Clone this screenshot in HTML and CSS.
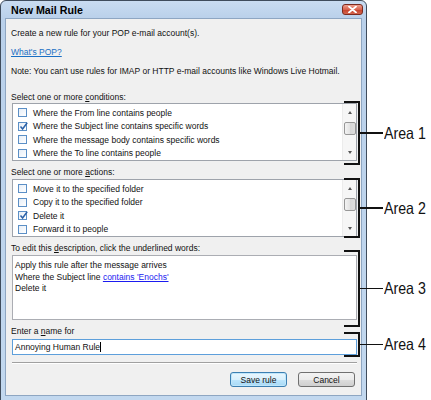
FILE: index.html
```html
<!DOCTYPE html>
<html>
<head>
<meta charset="utf-8">
<title>New Mail Rule</title>
<link rel="stylesheet" href="styles.css">
</head>
<body>
<div class="stage">
  <div class="window">
    <div class="titlebar">
      <span class="title">New Mail Rule</span>
      <span class="close">
        <svg width="9" height="7" viewBox="0 0 9 7"><path d="M1 0.5 L8 6.5 M8 0.5 L1 6.5" stroke="#fff" stroke-width="1.8" stroke-linecap="round"/></svg>
      </span>
    </div>
    <div class="content">
      <div class="line">Create a new rule for your POP e-mail account(s).</div>
      <div class="line gap7"><a class="link">What's POP?</a></div>
      <div class="line gap7">Note: You can't use rules for IMAP or HTTP e-mail accounts like Windows Live Hotmail.</div>

      <div class="line gap14">Select one or more <u>c</u>onditions:</div>
      <div class="listbox">
        <ul class="items">
          <li><span class="cb"></span>Where the From line contains people</li>
          <li><span class="cb checked"><svg width="9" height="9" viewBox="0 0 9 9"><path d="M1.5 4.5 L3.6 7 L8.2 0.8" fill="none" stroke="#2c62a8" stroke-width="1.5"/></svg></span>Where the Subject line contains specific words</li>
          <li><span class="cb"></span>Where the message body contains specific words</li>
          <li><span class="cb"></span>Where the To line contains people</li>
        </ul>
        <div class="scrollbar">
          <div class="sb-btn"><span class="arr up"></span></div>
          <div class="thumb"></div>
          <div class="sb-fill"></div>
          <div class="sb-btn"><span class="arr down"></span></div>
        </div>
      </div>

      <div class="line gap5">Select one or more <u>a</u>ctions:</div>
      <div class="listbox gap1">
        <ul class="items">
          <li><span class="cb"></span>Move it to the specified folder</li>
          <li><span class="cb"></span>Copy it to the specified folder</li>
          <li><span class="cb checked"><svg width="9" height="9" viewBox="0 0 9 9"><path d="M1.5 4.5 L3.6 7 L8.2 0.8" fill="none" stroke="#2c62a8" stroke-width="1.5"/></svg></span>Delete it</li>
          <li><span class="cb"></span>Forward it to people</li>
        </ul>
        <div class="scrollbar">
          <div class="sb-btn"><span class="arr up"></span></div>
          <div class="thumb"></div>
          <div class="sb-fill"></div>
          <div class="sb-btn"><span class="arr down"></span></div>
        </div>
      </div>

      <div class="line gap5">To edit this <u>d</u>escription, click the underlined words:</div>
      <div class="desc">
        <div>Apply this rule after the message arrives</div>
        <div>Where the Subject line <a class="ulink">contains 'Enochs'</a></div>
        <div>Delete it</div>
      </div>

      <div class="line gap5">Enter a <u>n</u>ame for</div>
      <div class="namebox"><span>Annoying Human Rule</span><span class="caret"></span></div>

      <div class="separator"></div>

      <div class="buttons">
        <span class="btn default">Save rule</span>
        <span class="btn">Cancel</span>
      </div>
    </div>
  </div>

  <div class="callout c1"><span class="bracket"></span><span class="leader"></span><span class="area">Area 1</span></div>
  <div class="callout c2"><span class="bracket"></span><span class="leader"></span><span class="area">Area 2</span></div>
  <div class="callout c3"><span class="bracket"></span><span class="leader"></span><span class="area">Area 3</span></div>
  <div class="callout c4"><span class="bracket"></span><span class="leader"></span><span class="area">Area 4</span></div>
</div>
</body>
</html>
```
FILE: styles.css
```css
* { box-sizing: border-box; }
html, body { margin: 0; padding: 0; background: #fff; }
body {
  font-family: "Liberation Sans", Arial, sans-serif;
  font-size: 8.5px;
  color: #111;
}
.stage { position: relative; width: 431px; height: 400px; overflow: hidden; }

.window {
  width: 367px;
  height: 401px;
  border: 1px solid #3f4c5c;
  border-radius: 6px 6px 0 0;
  background: linear-gradient(#c9dcf1, #b9d0ea 18px, #c2d8ef);
  padding: 0 4px 4px;
  display: flex;
  flex-direction: column;
}
.titlebar {
  height: 17px;
  display: flex;
  align-items: center;
  padding-left: 6px;
}
.title { font-weight: bold; font-size: 10.7px; color: #000; }
.close {
  margin-left: auto;
  margin-right: -1px;
  width: 21px;
  height: 11px;
  border: 1px solid #7c2a1e;
  border-radius: 3px;
  background: linear-gradient(#eea08f, #d9624d 50%, #c43f28 51%, #d4664f);
  display: flex;
  align-items: center;
  justify-content: center;
}
.content {
  flex: 1;
  background: #f0f0f0;
  border: 1px solid #8ea6c2;
  padding: 8px 4px 0 5px;
  display: flex;
  flex-direction: column;
}
.line { line-height: 12px; height: 12px; white-space: nowrap; }
.gap7 { margin-top: 7px; }
.gap14 { margin-top: 14px; }
.gap5 { margin-top: 5px; }
.gap1 { margin-top: 1px; }
.link { color: #1a6fc4; text-decoration: underline; }

.listbox {
  margin-left: 1px;
  width: 345px;
  height: 58px;
  border: 1px solid #9ea3ab;
  background: #fff;
  display: flex;
}
.items {
  list-style: none;
  margin: 0;
  padding: 2px 0 0 0;
  flex: 1;
}
.items li {
  height: 13.5px;
  display: flex;
  align-items: center;
  white-space: nowrap;
}
.cb {
  width: 9px;
  height: 9px;
  margin-left: 5px;
  margin-right: 6px;
  border: 1px solid #5b8fc6;
  background: linear-gradient(135deg, #e6eef7, #ffffff);
  position: relative;
  flex: none;
}
.cb svg { position: absolute; left: 0; top: -1px; }

.scrollbar {
  width: 14px;
  background: #f6f6f6;
  border-left: 1px solid #ececec;
  display: flex;
  flex-direction: column;
  align-items: center;
}
.sb-btn {
  height: 16px;
  width: 100%;
  display: flex;
  align-items: center;
  justify-content: center;
}
.arr { width: 0; height: 0; border-left: 2.5px solid transparent; border-right: 2.5px solid transparent; }
.arr.up { border-bottom: 3px solid #555; }
.arr.down { border-top: 3px solid #555; }
.thumb {
  margin-top: 2px;
  width: 12px;
  height: 13px;
  border: 1px solid #979797;
  border-radius: 2px;
  background: linear-gradient(90deg, #f3f3f3, #e2e2e2 50%, #d6d6d6 51%, #dedede);
}
.sb-fill { flex: 1; }

.desc {
  margin-top: 1px;
  margin-left: 1px;
  width: 345px;
  height: 65px;
  border: 1px solid #abadb3;
  background: #fff;
  padding: 4px 2px 0;
  line-height: 11.7px;
}
.ulink { color: #1b1bf0; text-decoration: underline; }

.namebox {
  margin-top: 2px;
  margin-left: 1px;
  width: 345px;
  height: 16px;
  border: 1px solid #5d9fdb;
  background: #fff;
  padding-left: 2px;
  display: flex;
  align-items: center;
}
.caret { width: 1px; height: 10px; background: #000; }

.separator {
  margin-top: 7px;
  margin-left: 1px;
  width: 345px;
  height: 2px;
  border-top: 1px solid #a0a0a0;
  border-bottom: 1px solid #ffffff;
}
.buttons {
  margin-top: 8px;
  display: flex;
  justify-content: flex-end;
  gap: 11px;
  padding-right: 2px;
}
.btn {
  width: 57px;
  height: 15px;
  border: 1px solid #707070;
  border-radius: 3px;
  background: linear-gradient(#f3f3f3, #ebebeb 50%, #dddddd 51%, #cfcfcf);
  display: flex;
  align-items: center;
  justify-content: center;
  color: #111;
}
.btn.default {
  border-color: #3c7fb1;
  background: linear-gradient(#eaf6fd, #d9f0fc 50%, #bee6fd 51%, #a7d9f5);
  box-shadow: inset 0 0 0 1px #bfe6fb;
}

.callout {
  position: absolute;
  left: 344px;
  display: flex;
  align-items: center;
}
.c1 { top: 101px; height: 64px; }
.c2 { top: 178px; height: 60px; }
.c3 { top: 250px; height: 77px; }
.c4 { top: 332px; height: 25px; }
.bracket {
  width: 16px;
  height: 100%;
  border: 2px solid #111;
  border-left: none;
}
.leader { width: 23px; height: 1.5px; background: #111; }
.area {
  display: inline-block;
  margin-left: 1px;
  font-family: "Liberation Sans", Arial, sans-serif;
  font-size: 16.5px;
  color: #111;
  line-height: 1;
  white-space: nowrap;
  transform: scaleX(0.86);
  transform-origin: left center;
}
```
